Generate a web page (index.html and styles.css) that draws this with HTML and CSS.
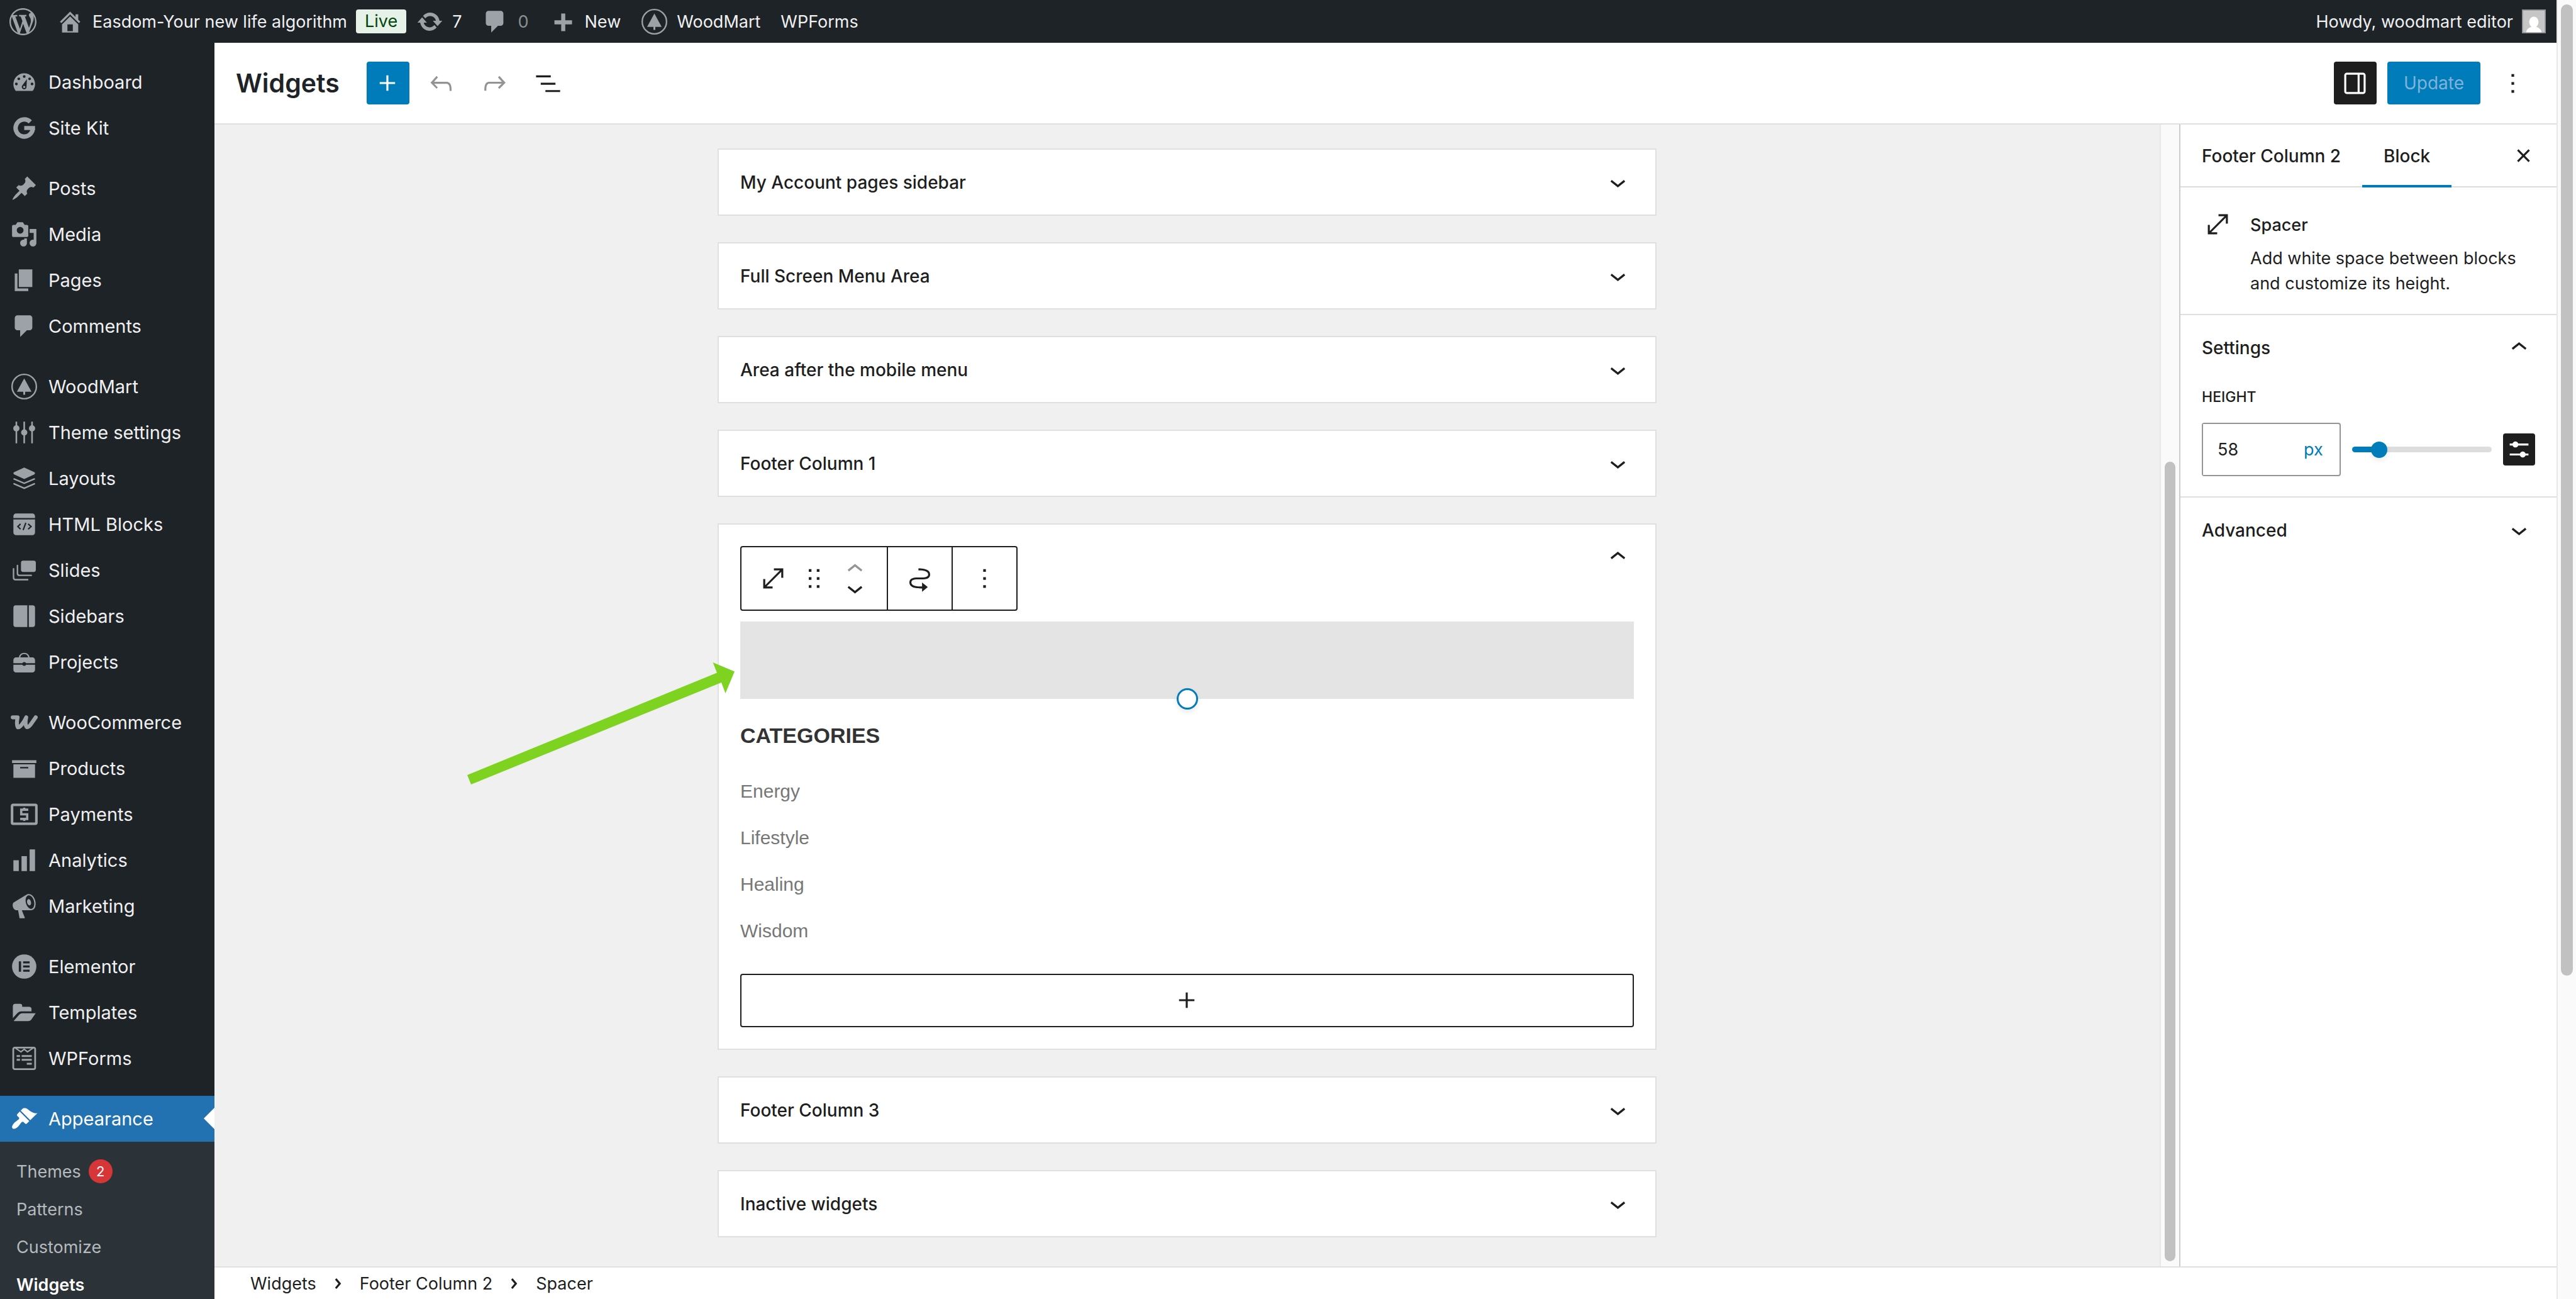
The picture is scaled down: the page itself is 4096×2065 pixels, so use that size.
FILE: index.html
```html
<!DOCTYPE html>
<html lang="en">
  <head>
    <meta charset="UTF-8" />
    <meta name="viewport" content="width=device-width, initial-scale=1.0" />
    <title>Widgets</title>
    <link rel="stylesheet" href="styles.css" />
  </head>
  <body>
    <!-- shared icons -->
    <svg class="sprite" aria-hidden="true">
      <symbol id="chevron-down" viewBox="0 0 24 24"><path d="M17.5 11.6L12 16l-5.5-4.4.9-1.2L12 14l4.5-3.6 1 1.2z" /></symbol>
      <symbol id="chevron-up" viewBox="0 0 24 24"><path d="M6.5 12.4L12 8l5.5 4.4-.9 1.2L12 10l-4.5 3.6-1-1.2z" /></symbol>
      <symbol id="chevron-small" viewBox="0 0 24 24"><path d="M10.862 8.04l3.418 3.989-3.418 3.988-1.139-.976 2.582-3.012-2.582-3.012 1.139-.977z" /></symbol>
      <symbol id="plus" viewBox="0 0 24 24"><path d="M11 12.5v5h1.5v-5h5V11h-5V6H11v5H6v1.5z" /></symbol>
      <symbol id="more" viewBox="0 0 24 24"><path d="M13 19h-2v-2h2v2zm0-6h-2v-2h2v2zm0-6h-2V5h2v2z" /></symbol>
      <symbol id="spacer" viewBox="0 0 24 24"><path d="M7 18h4.5v1.5h-7v-7H6V17L17 6h-4.5V4.5h7v7H18V7L7 18z" /></symbol>
      <symbol id="comment" viewBox="0 0 20 20"><path d="M5 2h9c1.1 0 2 .9 2 2v7c0 1.1-.9 2-2 2h-2l-5 5v-5H5c-1.1 0-2-.9-2-2V4c0-1.1.9-2 2-2z" /></symbol>
      <symbol id="woodmart" viewBox="0 0 20 20">
        <circle cx="10" cy="10" r="9" fill="none" stroke="currentColor" stroke-width="1.1" />
        <path d="M10 4l5.4 9.8h-4.7v2.3H9.3v-2.3H4.6z" />
      </symbol>
    </svg>

    <div class="page">
      <header class="adminbar">
        <a href="#" class="bar-item" aria-label="About WordPress">
          <svg class="dashicon" viewBox="0 0 20 20"><path d="M20 10c0-5.51-4.49-10-10-10C4.48 0 0 4.49 0 10c0 5.52 4.48 10 10 10 5.51 0 10-4.48 10-10zM7.78 15.37L4.37 6.22c.55-.02 1.17-.08 1.17-.08.5-.06.44-1.13-.06-1.11 0 0-1.45.11-2.37.11-.18 0-.37 0-.58-.01C4.12 2.69 6.87 1.11 10 1.11c2.33 0 4.45.87 6.05 2.34-.68-.11-1.65.39-1.65 1.58 0 .74.45 1.36.9 2.1.35.61.55 1.36.55 2.46 0 1.49-1.4 5-1.4 5l-3.03-8.37c.54-.02.82-.17.82-.17.5-.05.44-1.25-.06-1.22 0 0-1.44.12-2.38.12-.87 0-2.33-.12-2.33-.12-.5-.03-.56 1.2-.06 1.22l.92.08 1.26 3.41zM17.41 10c.24-.64.74-1.87.43-4.25.7 1.29 1.05 2.71 1.05 4.25 0 3.29-1.73 6.24-4.4 7.78.97-2.59 1.94-5.2 2.92-7.78zM6.1 18.09C3.12 16.65 1.11 13.53 1.11 10c0-1.3.23-2.48.72-3.59C3.25 10.3 4.67 14.2 6.1 18.09zm4.03-6.63l2.58 6.98c-.86.29-1.76.45-2.71.45-.79 0-1.57-.11-2.29-.33.81-2.38 1.62-4.74 2.42-7.1z" /></svg>
        </a>
        <a href="#" class="bar-item">
          <svg class="dashicon" viewBox="0 0 20 20"><path d="M16 8.5l1.53 1.53-1.06 1.06L10 4.6l-6.47 6.49-1.06-1.06L10 2.5l4 4v-2h2v4zm-6-2.46l6 5.99V18H4v-5.97zM12 17v-5H8v5h4z" /></svg>
          Easdom-Your new life algorithm
          <span class="live">Live</span>
        </a>
        <a href="#" class="bar-item after-live">
          <svg class="dashicon" viewBox="0 0 20 20"><path d="M10.2 3.28c3.53 0 6.43 2.61 6.92 6h2.08l-3.5 4-3.5-4h2.32c-.45-1.97-2.21-3.45-4.32-3.45-1.45 0-2.73.71-3.54 1.78L4.95 5.66C6.23 4.2 8.11 3.28 10.2 3.28zm-.4 13.44c-3.52 0-6.43-2.61-6.92-6H.8l3.5-4c1.17 1.33 2.33 2.67 3.5 4H5.48c.45 1.97 2.21 3.45 4.32 3.45 1.45 0 2.73-.71 3.54-1.78l1.71 1.95c-1.28 1.46-3.15 2.38-5.25 2.38z" /></svg>
          7
        </a>
        <a href="#" class="bar-item bar-muted"><svg class="dashicon"><use href="#comment" /></svg>0</a>
        <a href="#" class="bar-item">
          <svg class="dashicon" viewBox="0 0 20 20"><path d="M17 9v3h-5v5H9v-5H4V9h5V4h3v5z" /></svg>
          New
        </a>
        <a href="#" class="bar-item"><svg class="dashicon"><use href="#woodmart" /></svg>WoodMart</a>
        <a href="#" class="bar-item">WPForms</a>
        <a href="#" class="bar-item account">
          Howdy, woodmart editor
          <svg class="avatar" viewBox="0 0 18 18">
            <path fill="#8c8f94" d="M0 0h18v18H0z" />
            <path fill="#c6c6c6" d="M.8.8h16.4v16.4H.8z" />
            <path fill="#fff" d="M9 5.4c2.1 0 3.5 1.8 3.5 4 0 1.6-.7 3-1.7 3.7 2.2.6 3.9 2.2 4 4.1H3.2c.1-1.9 1.8-3.5 4-4.1-1-.7-1.7-2.1-1.7-3.7 0-2.2 1.4-4 3.5-4z" />
          </svg>
        </a>
      </header>

      <div class="main">
        <nav class="menu">
          <a href="#" class="menu-item">
            <svg class="dashicon" viewBox="0 0 20 20">
              <path d="M3.76 16.5h12.48C17.34 15.13 18 13.39 18 11.5c0-4.42-3.58-8-8-8s-8 3.58-8 8c0 1.89.66 3.63 1.76 5z" />
              <g class="cut">
                <circle cx="10" cy="5.9" r="1" /><circle cx="6" cy="7.6" r="1" /><circle cx="14" cy="7.6" r="1" />
                <circle cx="4.2" cy="11.4" r="1" /><circle cx="15.8" cy="11.4" r="1" />
                <path d="M12 7.8l-.3 5.8c0 1-.8 1.8-1.7 1.8s-1.8-.8-1.8-1.8c0-.6.2-1 .6-1.4z" />
              </g>
              <circle cx="10" cy="13.6" r=".8" />
            </svg>
            Dashboard
          </a>
          <a href="#" class="menu-item">
            <svg class="dashicon" viewBox="0 0 20 20"><path fill="none" stroke="currentColor" stroke-width="3.3" d="M14.5 5.5A6.35 6.35 0 1 0 16.33 10.5" /><path d="M10 8.5h8v3h-8z" /></svg>
            Site Kit
          </a>

          <a href="#" class="menu-item first">
            <svg class="dashicon" viewBox="0 0 20 20"><path d="M10.44 3.02l1.82-1.82 6.36 6.35-1.83 1.82c-1.05-.68-2.48-.57-3.41.36l-.75.75c-.92.93-1.04 2.35-.35 3.41l-1.83 1.82-2.41-2.41-2.8 2.79c-.42.42-3.38 2.71-3.8 2.29s1.86-3.39 2.28-3.81l2.79-2.79L4.1 9.36l1.83-1.82c1.05.69 2.48.57 3.4-.36l.75-.75c.93-.92 1.05-2.35.36-3.41z" /></svg>
            Posts
          </a>
          <a href="#" class="menu-item">
            <svg class="dashicon" viewBox="0 0 20 20"><path d="M13 11V4c0-.55-.45-1-1-1h-1.67L9 1H5L3.67 3H2c-.55 0-1 .45-1 1v7c0 .55.45 1 1 1h10c.55 0 1-.45 1-1zM7 4.5c1.38 0 2.5 1.12 2.5 2.5S8.38 9.5 7 9.5 4.5 8.38 4.5 7 5.62 4.5 7 4.5zM14 6h5v10.5c0 1.38-1.12 2.5-2.5 2.5S14 17.88 14 16.5s1.12-2.5 2.5-2.5c.17 0 .34.02.5.05V9h-3V6zm-4 8.05V13h2v3.5c0 1.38-1.12 2.5-2.5 2.5S7 17.88 7 16.5 8.12 14 9.5 14c.17 0 .34.02.5.05z" /></svg>
            Media
          </a>
          <a href="#" class="menu-item">
            <svg class="dashicon" viewBox="0 0 20 20"><path d="M6 15V2h10v13H6zm-1 1h8v2H3V5h2v11z" /></svg>
            Pages
          </a>
          <a href="#" class="menu-item"><svg class="dashicon"><use href="#comment" /></svg>Comments</a>

          <a href="#" class="menu-item first"><svg class="dashicon"><use href="#woodmart" /></svg>WoodMart</a>
          <a href="#" class="menu-item">
            <svg class="dashicon" viewBox="0 0 20 20">
              <path d="M3.6 2h1.2v16H3.6zM9.4 2h1.2v16H9.4zM15.2 2h1.2v16h-1.2z" />
              <circle cx="4.2" cy="7" r="2.3" /><circle cx="10" cy="10" r="2.3" /><circle cx="15.8" cy="7" r="2.3" />
            </svg>
            Theme settings
          </a>
          <a href="#" class="menu-item">
            <svg class="dashicon" viewBox="0 0 20 20">
              <path d="M10 2l7.4 3.4c.8.5.8 1.2 0 1.7L10 10.5 2.6 7.1c-.8-.5-.8-1.2 0-1.7z" />
              <path fill="none" stroke="currentColor" stroke-width="1.1" stroke-linecap="round" d="M2.5 10.4l7.5 3.2 7.5-3.2M2.5 14l7.5 3.3 7.5-3.3" />
            </svg>
            Layouts
          </a>
          <a href="#" class="menu-item">
            <svg class="dashicon" viewBox="0 0 20 20">
              <path d="M4 2h12a2 2 0 0 1 2 2v1.4H2V4a2 2 0 0 1 2-2zM2 6.4h16V16a2 2 0 0 1-2 2H4a2 2 0 0 1-2-2z" />
              <path class="cut-line" d="M7.3 9.7L5.3 11.6l2 2M12.9 9.7l2.2 1.9-2.2 2M11.2 8.9l-2 5.4" />
            </svg>
            HTML Blocks
          </a>
          <a href="#" class="menu-item">
            <svg class="dashicon" viewBox="0 0 20 20">
              <rect x="7.6" y="2.9" width="11" height="8.4" rx="1.6" />
              <path fill="none" stroke="currentColor" stroke-width="1.1" stroke-linecap="round" d="M5 6.5v5.8c0 .9.6 1.5 1.5 1.5h8.7M2.1 8.9v6.6c0 .9.6 1.5 1.5 1.5h9" />
            </svg>
            Slides
          </a>
          <a href="#" class="menu-item">
            <svg class="dashicon" viewBox="0 0 20 20"><path d="M3.8 2h8.5v16H3.8A1.8 1.8 0 0 1 2 16.2V3.8A1.8 1.8 0 0 1 3.8 2zM13.4 2h2.8A1.8 1.8 0 0 1 18 3.8v12.4a1.8 1.8 0 0 1-1.8 1.8h-2.8z" /></svg>
            Sidebars
          </a>
          <a href="#" class="menu-item">
            <svg class="dashicon" viewBox="0 0 20 20">
              <path fill="none" stroke="currentColor" d="M6.5 6.5C7 4.6 8.4 3.6 10 3.6s3 1 3.5 2.9" />
              <path d="M4 6.5h12a2 2 0 0 1 2 2v2.3H2V8.5a2 2 0 0 1 2-2zM2 12h16v3.7a2 2 0 0 1-2 2H4a2 2 0 0 1-2-2z" />
              <circle class="cut" cx="10" cy="11.4" r="1.4" />
            </svg>
            Projects
          </a>

          <a href="#" class="menu-item first">
            <svg class="dashicon" viewBox="0 0 20 20"><path fill="none" stroke="currentColor" stroke-width="2.9" stroke-linecap="round" stroke-linejoin="round" d="M1.5 6.2h3.6c-.5 2.6-.7 5.9.1 7.3 1.4.8 4.6-3.6 6.3-7.3-.7 2.8-.7 6.2.4 7.2 1.8.6 4.4-4.2 6.6-7.2" /></svg>
            WooCommerce
          </a>
          <a href="#" class="menu-item">
            <svg class="dashicon" viewBox="0 0 20 20"><path d="M19 4v2H1V4h18zM2 7h16v10H2V7zm11 3V9H7v1h6z" /></svg>
            Products
          </a>
          <a href="#" class="menu-item">
            <svg class="dashicon" viewBox="0 0 20 20">
              <rect x="1" y="3" width="18" height="14" rx=".8" fill="none" stroke="currentColor" stroke-width="1.9" />
              <path fill="none" stroke="currentColor" stroke-width="1.7" d="M13 6.6H7.8v3.4h4.4v3.4H7M10 5.1v1.5M10 13.4v1.5" />
            </svg>
            Payments
          </a>
          <a href="#" class="menu-item">
            <svg class="dashicon" viewBox="0 0 20 20"><path d="M18 18V2h-4v16h4zm-6 0V7H8v11h4zm-6 0v-8H2v8h4z" /></svg>
            Analytics
          </a>
          <a href="#" class="menu-item">
            <svg class="dashicon" viewBox="0 0 20 20"><path d="M18.15 5.94c.46 1.62.38 3.22-.02 4.48-.42 1.28-1.26 2.18-2.3 2.48-.16.06-.26.06-.4.06-.06.02-.12.02-.18.02-.06.02-.14.02-.22.02h-6.8l2.22 5.5c.02.14-.06.26-.14.34-.08.1-.24.16-.34.16H6.95c-.1 0-.26-.06-.34-.16-.08-.08-.16-.2-.14-.34l-1-5.5H4.25l-.02-.02c-.5.06-1.08-.18-1.54-.62s-.88-1.08-1.06-1.88c-.24-.8-.2-1.56-.02-2.2.18-.62.58-1.08 1.06-1.3l.02-.02 9-5.4c.1-.06.18-.1.24-.16.06-.04.14-.08.24-.12.16-.08.28-.12.5-.18 1.04-.3 2.24.1 3.22.98s1.84 2.24 2.26 3.86zm-2.58 5.98h-.02c.4-.1.74-.34 1.04-.7.58-.7.86-1.76.86-3.04 0-.64-.1-1.3-.28-1.98-.34-1.36-1.02-2.5-1.78-3.24s-1.68-1.1-2.46-.88c-.82.22-1.4.96-1.7 2-.32 1.04-.28 2.36.06 3.72.38 1.36 1 2.5 1.8 3.24.78.74 1.62 1.1 2.48.88zm-2.54-7.08c.22-.04.42-.02.62.04.38.16.76.48 1.02 1s.42 1.2.42 1.78c0 .3-.04.56-.12.8-.18.48-.44.84-.86.94-.34.1-.8-.06-1.14-.4s-.64-.86-.78-1.5c-.18-.62-.12-1.24.02-1.72s.48-.84.82-.94z" /></svg>
            Marketing
          </a>

          <a href="#" class="menu-item first">
            <svg class="dashicon" viewBox="0 0 20 20">
              <circle cx="10" cy="10" r="9" />
              <path class="cut" d="M6 6.2h1.7v7.6H6zM9.2 6.2H14v1.5H9.2zM9.2 9.2H14v1.5H9.2zM9.2 12.3H14v1.5H9.2z" />
            </svg>
            Elementor
          </a>
          <a href="#" class="menu-item">
            <svg class="dashicon" viewBox="0 0 20 20"><path d="M1.6 14.2V5.3c0-1 .7-1.7 1.7-1.7h3.7c.9 0 1.5.5 1.5 1.3v.9h5.2c1 0 1.7.6 1.7 1.5v1.9H8.1c-1.8 0-2.8.8-3.9 2.1zM2.3 16.2l3.5-4c.8-1 1.6-1.6 2.8-1.6h9.9l-3 4.3c-.7 1-1.5 1.5-2.7 1.5H2.5c-.2 0-.3-.1-.2-.2z" /></svg>
            Templates
          </a>
          <a href="#" class="menu-item">
            <svg class="dashicon" viewBox="0 0 20 20">
              <rect x="1.9" y="2" width="16.2" height="16" rx="1.2" fill="none" stroke="currentColor" stroke-width="1.3" />
              <path fill="none" stroke="currentColor" d="M3.5 2.4l4.1 2.8L10 3.2l2.4 2 4.1-2.8" />
              <path d="M4.4 7.6h2.5V9H4.4zM8.1 7.6h7.5V9H8.1zM4.4 10.4h2.5v1.4H4.4zM8.1 10.4h7.5v1.4H8.1zM11.9 13.3h3.7v1.4h-3.7z" />
            </svg>
            WPForms
          </a>

          <a href="#" class="menu-item first current">
            <svg class="dashicon" viewBox="0 0 20 20"><path d="M14.48 11.06L7.41 3.99l1.5-1.5c.5-.56 2.3-.47 3.51.32 1.21.8 1.43 1.28 2.91 2.1 1.18.64 2.45 1.26 4.45.85zm-.71.71L6.7 4.7 4.93 6.47c-.39.39-.39 1.02 0 1.41l1.06 1.06c.39.39.39 1.03 0 1.42-.6.6-1.43 1.11-2.21 1.69-.35.26-.7.53-1.01.84C1.43 14.23.4 16.08 1.4 17.07c.99 1 2.84-.03 4.18-1.36.31-.31.58-.66.85-1.02.57-.78 1.08-1.61 1.69-2.21.39-.39 1.02-.39 1.41 0l1.06 1.06c.39.39 1.02.39 1.41 0z" /></svg>
            Appearance
          </a>
          <div class="submenu">
            <a href="#">Themes <span class="count">2</span></a>
            <a href="#">Patterns</a>
            <a href="#">Customize</a>
            <a href="#" class="active">Widgets</a>
          </div>
        </nav>

        <div class="editor">
          <div class="editor-header">
            <h1>Widgets</h1>
            <button class="btn primary" aria-label="Toggle block inserter"><svg class="icon"><use href="#plus" /></svg></button>
            <button class="btn" aria-label="Undo" disabled>
              <svg class="icon" viewBox="0 0 24 24"><path d="M18.3 11.7c-.6-.6-1.4-.9-2.3-.9H6.7l2.9-3.3-1.1-1-4.5 5L8.5 16l1-1-2.7-2.7H16c.5 0 .9.2 1.3.5 1 1 1 3.4 1 4.5v.3h1.5v-.2c0-1.5 0-4.3-1.5-5.7z" /></svg>
            </button>
            <button class="btn" aria-label="Redo" disabled>
              <svg class="icon" viewBox="0 0 24 24"><path d="M15.6 6.5l-1.1 1 2.9 3.3H8c-.9 0-1.7.3-2.3.9-1.4 1.5-1.4 4.2-1.4 5.6v.2h1.5v-.3c0-1.1 0-3.5 1-4.5.3-.3.7-.5 1.3-.5h9.2L14.5 15l1.1 1.1 4.6-4.6-4.6-5z" /></svg>
            </button>
            <button class="btn" aria-label="List View">
              <svg class="icon" viewBox="0 0 24 24"><path d="M3 6h11v1.5H3zM6.5 11.5h11V13h-11zM21 17H10v1.5h11z" /></svg>
            </button>
            <button class="btn dark push" aria-label="Settings">
              <svg class="icon" viewBox="0 0 24 24"><path d="M18 4H6c-1.1 0-2 .9-2 2v12c0 1.1.9 2 2 2h12c1.1 0 2-.9 2-2V6c0-1.1-.9-2-2-2zm-4 14.5H6c-.3 0-.5-.2-.5-.5V6c0-.3.2-.5.5-.5h8v13zm4.5-.5c0 .3-.2.5-.5.5h-2.5v-13H18c.3 0 .5.2.5.5v12z" /></svg>
            </button>
            <button class="btn primary update">Update</button>
            <button class="btn" aria-label="Options"><svg class="icon"><use href="#more" /></svg></button>
          </div>

          <div class="editor-body">
            <main class="canvas">
              <section class="area">
                <button class="area-toggle">My Account pages sidebar <svg class="icon"><use href="#chevron-down" /></svg></button>
              </section>
              <section class="area">
                <button class="area-toggle">Full Screen Menu Area <svg class="icon"><use href="#chevron-down" /></svg></button>
              </section>
              <section class="area">
                <button class="area-toggle">Area after the mobile menu <svg class="icon"><use href="#chevron-down" /></svg></button>
              </section>
              <section class="area">
                <button class="area-toggle">Footer Column 1 <svg class="icon"><use href="#chevron-down" /></svg></button>
              </section>

              <section class="area">
                <button class="area-toggle" aria-label="Footer Column 2"><span></span><svg class="icon"><use href="#chevron-up" /></svg></button>
                <div class="toolbar">
                  <div class="toolbar-group">
                    <button aria-label="Spacer"><svg class="icon"><use href="#spacer" /></svg></button>
                    <button aria-label="Drag">
                      <svg class="icon" viewBox="0 0 24 24"><path d="M8 7h2V5H8v2zm0 6h2v-2H8v2zm0 6h2v-2H8v2zm6-14v2h2V5h-2zm0 8h2v-2h-2v2zm0 6h2v-2h-2v2z" /></svg>
                    </button>
                    <div class="movers">
                      <button aria-label="Move up" disabled><svg viewBox="0 5 24 14"><path d="M6.5 12.4L12 8l5.5 4.4-.9 1.2L12 10l-4.5 3.6-1-1.2z" /></svg></button>
                      <button aria-label="Move down"><svg viewBox="0 5 24 14"><path d="M17.5 11.6L12 16l-5.5-4.4.9-1.2L12 14l4.5-3.6 1 1.2z" /></svg></button>
                    </div>
                  </div>
                  <div class="toolbar-group">
                    <button aria-label="Move to widget area">
                      <svg class="icon" viewBox="0 0 24 24"><path d="M19.75 9c0-1.257-.565-2.197-1.39-2.858-.797-.64-1.827-1.017-2.815-1.247-1.802-.42-3.703-.403-4.383-.396L11 4.5V6l.177-.001c.696-.006 2.416-.02 4.028.356.887.207 1.67.518 2.216.957.52.416.829.945.829 1.688 0 .592-.167.966-.407 1.23-.255.281-.656.508-1.236.674-1.19.34-2.82.346-4.607.346h-.077c-1.692 0-3.527 0-4.942.404-.732.209-1.424.545-1.935 1.108-.526.579-.796 1.33-.796 2.238 0 1.257.565 2.197 1.39 2.858.797.64 1.827 1.017 2.815 1.247 1.802.42 3.703.403 4.383.396L13 19.5h.714V22L18 18.5 13.714 15v3H13l-.177.001c-.696.006-2.416.02-4.028-.356-.887-.207-1.67-.518-2.216-.957-.52-.416-.829-.945-.829-1.688 0-.592.167-.966.407-1.23.255-.281.656-.508 1.237-.674 1.189-.34 2.819-.346 4.606-.346h.077c1.692 0 3.527 0 4.941-.404.732-.209 1.425-.545 1.936-1.108.526-.579.796-1.33.796-2.238z" /></svg>
                    </button>
                  </div>
                  <div class="toolbar-group">
                    <button aria-label="Options"><svg class="icon"><use href="#more" /></svg></button>
                  </div>
                </div>

                <div class="area-content">
                  <div class="spacer-block">
                    <span class="resize-handle"></span>
                    <svg class="pointer" viewBox="0 0 427 197"><path fill="#7ed321" d="M1 180L398 17.5 391.5 1 426 15.5 411.5 50 405 33 7 195z" /></svg>
                  </div>
                  <h2 class="widget-title">CATEGORIES</h2>
                  <ul class="categories">
                    <li><a href="#">Energy</a></li>
                    <li><a href="#">Lifestyle</a></li>
                    <li><a href="#">Healing</a></li>
                    <li><a href="#">Wisdom</a></li>
                  </ul>
                  <button class="appender" aria-label="Add block"><svg class="icon"><use href="#plus" /></svg></button>
                </div>
              </section>

              <section class="area">
                <button class="area-toggle">Footer Column 3 <svg class="icon"><use href="#chevron-down" /></svg></button>
              </section>
              <section class="area">
                <button class="area-toggle">Inactive widgets <svg class="icon"><use href="#chevron-down" /></svg></button>
              </section>
            </main>
            <div class="scrollbar canvas-scroll"><span></span></div>

            <aside class="settings">
              <div class="tabs">
                <button class="tab">Footer Column 2</button>
                <button class="tab selected">Block</button>
                <button class="close" aria-label="Close settings">
                  <svg class="icon" viewBox="0 0 24 24"><path d="M12 13.06l3.712 3.713 1.061-1.06L13.061 12l3.712-3.712-1.06-1.06L12 10.938 8.288 7.227l-1.061 1.06L10.939 12l-3.712 3.712 1.06 1.061z" /></svg>
                </button>
              </div>
              <div class="card">
                <svg class="icon"><use href="#spacer" /></svg>
                <div class="card-text">
                  <h2>Spacer</h2>
                  <p>Add white space between blocks and customize its height.</p>
                </div>
              </div>
              <div class="panel">
                <button class="panel-toggle">Settings <svg class="icon"><use href="#chevron-up" /></svg></button>
                <div class="panel-body">
                  <label for="height">Height</label>
                  <div class="height-row">
                    <div class="unit-control">
                      <input type="text" id="height" value="58" />
                      <select aria-label="Unit"><option>px</option></select>
                    </div>
                    <input type="range" min="0" max="376" value="58" aria-label="Height slider" />
                    <button class="custom-size" aria-label="Set custom size">
                      <svg class="icon" viewBox="0 0 24 24"><path d="M19 7.5h-7.628c-.309-.874-1.142-1.5-2.122-1.5s-1.813.626-2.122 1.5H5V9h2.128c.309.874 1.142 1.5 2.122 1.5s1.813-.626 2.122-1.5H19zM19 15h-2.128c-.309-.874-1.142-1.5-2.122-1.5s-1.813.626-2.122 1.5H5v1.5h7.628c.309.874 1.142 1.5 2.122 1.5s1.813-.626 2.122-1.5H19z" /></svg>
                    </button>
                  </div>
                </div>
              </div>
              <div class="panel">
                <button class="panel-toggle">Advanced <svg class="icon"><use href="#chevron-down" /></svg></button>
              </div>
            </aside>
          </div>

          <footer class="breadcrumb">
            <a href="#">Widgets</a>
            <svg class="icon"><use href="#chevron-small" /></svg>
            <a href="#">Footer Column 2</a>
            <svg class="icon"><use href="#chevron-small" /></svg>
            <span>Spacer</span>
          </footer>
        </div>
      </div>
    </div>
    <div class="scrollbar page-scroll"><span></span></div>
  </body>
</html>
```
FILE: styles.css
```css
* {
  box-sizing: border-box;
  margin: 0;
  padding: 0;
}

body {
  display: flex;
  height: 100vh;
  overflow: hidden;
  font-family: Inter, "Liberation Sans", sans-serif;
  font-size: 27px;
  color: #1e1e1e;
  background: #fff;
}

a {
  color: inherit;
  text-decoration: none;
}

button {
  display: flex;
  align-items: center;
  justify-content: center;
  font: inherit;
  color: inherit;
  background: none;
  border: none;
  cursor: pointer;
}

svg {
  display: block;
  flex: none;
  fill: currentColor;
}

.sprite {
  position: absolute;
  width: 0;
  height: 0;
}

.icon {
  width: 51px;
  height: 51px;
}

.dashicon {
  width: 43px;
  height: 43px;
  color: #9ca2a7;
}

.page {
  flex: 1;
  min-width: 0;
  display: flex;
  flex-direction: column;
}

/* admin bar */
.adminbar {
  display: flex;
  align-items: center;
  gap: 32px;
  height: 68px;
  padding: 0 17px 0 15px;
  color: #f0f0f1;
  background: #1d2327;
}

.bar-item {
  display: flex;
  align-items: center;
  gap: 14px;
  white-space: nowrap;
}

.live {
  padding: 0 14px;
  line-height: 38px;
  color: #00450c;
  background: #e6f2e8;
  border-radius: 4px;
}

.after-live {
  margin-left: -16px;
}

.bar-muted {
  color: #8c8f92;
}

.account {
  margin-left: auto;
}

.avatar {
  width: 38px;
  height: 38px;
}

/* left menu */
.main {
  flex: 1;
  min-height: 0;
  display: flex;
}

.menu {
  flex: none;
  width: 341px;
  padding-top: 26px;
  overflow: hidden;
  font-size: 29px;
  color: #f0f0f1;
  background: #1d2327;
}

.menu-item {
  display: flex;
  align-items: center;
  gap: 17px;
  height: 73px;
  padding-left: 17px;
}

.first {
  margin-top: 23px;
}

.cut {
  fill: #1d2327;
}

.cut-line {
  fill: none;
  stroke: #1d2327;
  stroke-width: 1;
}

.current {
  position: relative;
  color: #fff;
  background: #2271b1;
}

.current .dashicon {
  color: #fff;
}

.current::after {
  content: "";
  position: absolute;
  right: 0;
  top: 19px;
  border: 17px solid transparent;
  border-left: none;
  border-right-color: #fff;
}

.submenu {
  height: 300px;
  padding-top: 17px;
  font-size: 27px;
  color: #b5babf;
  background: #2c3338;
}

.submenu a {
  display: flex;
  align-items: center;
  gap: 12px;
  height: 60px;
  padding-left: 26px;
}

.submenu .active {
  font-weight: 600;
  color: #fff;
}

.count {
  width: 38px;
  font-size: 22px;
  line-height: 38px;
  text-align: center;
  color: #fff;
  background: #d63638;
  border-radius: 50%;
}

/* editor */
.editor {
  flex: 1;
  min-width: 0;
  display: flex;
  flex-direction: column;
}

.editor-header {
  display: flex;
  align-items: center;
  gap: 17px;
  height: 130px;
  padding: 0 36px 0 34px;
  border-bottom: 2px solid #e0e0e0;
}

.editor-header h1 {
  margin-right: 26px;
  font-size: 41px;
  font-weight: 600;
  color: #1d2327;
}

.btn {
  width: 68px;
  height: 68px;
  border-radius: 4px;
}

.btn:disabled,
.movers button:disabled {
  color: #949494;
}

.primary {
  color: #fff;
  background: #007cba;
}

.dark {
  color: #fff;
  background: #1e1e1e;
}

.push {
  margin-left: auto;
}

.update {
  width: auto;
  padding: 0 26px;
  font-size: 28px;
  color: #7fb3d9;
}

.editor-body {
  flex: 1;
  min-height: 0;
  display: flex;
}

.canvas {
  flex: 1;
  display: flex;
  flex-direction: column;
  gap: 42px;
  padding-top: 38px;
  overflow: hidden;
  background: #f0f0f0;
}

.area {
  flex: none;
  position: relative;
  width: 1493px;
  max-width: 100%;
  margin: 0 auto;
  background: #fff;
  border: 2px solid #e0e0e0;
}

.area-toggle {
  justify-content: space-between;
  width: 100%;
  height: 103px;
  padding: 0 34px;
  font-size: 28px;
  font-weight: 500;
}

.area-content {
  padding: 51px 34px 34px;
}

.toolbar {
  position: absolute;
  top: 34px;
  left: 34px;
  display: flex;
  height: 103px;
  background: #fff;
  border: 2px solid #1e1e1e;
  border-radius: 4px;
}

.toolbar-group {
  display: flex;
  align-items: center;
  gap: 14px;
  padding: 0 25px;
}

.toolbar-group + .toolbar-group {
  border-left: 2px solid #1e1e1e;
}

.movers svg {
  width: 51px;
  height: 30px;
}

.spacer-block {
  position: relative;
  height: 123px;
  background: #e4e4e4;
}

.resize-handle {
  position: absolute;
  left: 50%;
  bottom: -17px;
  width: 34px;
  height: 34px;
  margin-left: -17px;
  background: #fff;
  border: 3px solid #007cba;
  border-radius: 50%;
  box-shadow: 0 4px 8px rgba(0, 0, 0, 0.08);
}

/* green arrow lying over the canvas */
.pointer {
  position: absolute;
  top: 64px;
  left: -435px;
  width: 427px;
  height: 197px;
}

.widget-title {
  margin-top: 34px;
  font-family: "Liberation Sans", Arial, sans-serif;
  font-size: 34px;
  line-height: 48px;
  color: #333;
}

.categories {
  display: flex;
  flex-direction: column;
  gap: 32px;
  margin: 44px 0 47px;
  font-family: "Liberation Sans", Arial, sans-serif;
  font-size: 30px;
  line-height: 42px;
  color: #777;
  list-style: none;
}

.appender {
  width: 100%;
  height: 85px;
  border: 2px solid #1e1e1e;
  border-radius: 4px;
}

/* scrollbars */
.scrollbar {
  flex: none;
  width: 31px;
  background: #fafafa;
  border-left: 2px solid #e8e8e8;
}

.scrollbar span {
  display: block;
  width: 17px;
  margin: 0 auto;
  background: #c1c1c1;
  border-radius: 10px;
}

.canvas-scroll {
  padding: 536px 0 8px;
}

.canvas-scroll span {
  height: 100%;
}

.page-scroll {
  padding-top: 7px;
}

.page-scroll span {
  width: 19px;
  height: 75%;
}

/* block settings */
.settings {
  flex: none;
  width: 600px;
  border-left: 2px solid #ccc;
}

.tabs {
  display: flex;
  height: 100px;
  padding-right: 27px;
  border-bottom: 2px solid #ddd;
}

.tab {
  height: 100px;
  padding: 0 34px;
  font-size: 28px;
  font-weight: 500;
}

.selected {
  box-shadow: inset 0 -4px #007cba;
}

.close {
  margin-left: auto;
}

.card {
  display: flex;
  gap: 26px;
  padding: 33px 34px 28px;
  border-bottom: 2px solid #e0e0e0;
}

.card-text {
  padding-top: 5px;
}

.card h2 {
  margin-bottom: 12px;
  font-size: 27px;
  font-weight: 500;
  line-height: 43px;
}

.card p {
  line-height: 40px;
}

.panel + .panel {
  border-top: 2px solid #e0e0e0;
}

.panel-toggle {
  justify-content: space-between;
  width: 100%;
  height: 103px;
  padding: 0 34px;
  font-size: 28px;
  font-weight: 500;
}

.panel-body {
  padding: 12px 34px 32px;
}

.panel-body label {
  display: block;
  margin-bottom: 26px;
  font-size: 23px;
  font-weight: 500;
  line-height: 30px;
  text-transform: uppercase;
}

.height-row {
  display: flex;
  align-items: center;
  gap: 18px;
}

.unit-control {
  display: flex;
  width: 221px;
  height: 85px;
  border: 2px solid #949494;
  border-radius: 4px;
}

.unit-control input {
  flex: 1;
  min-width: 0;
  padding-left: 23px;
  font: inherit;
  color: inherit;
  border: none;
}

.unit-control select {
  appearance: none;
  padding: 0 26px 0 8px;
  font: inherit;
  color: #007cba;
  background: none;
  border: none;
}

input[type="range"] {
  appearance: none;
  flex: 1;
  min-width: 0;
  height: 9px;
  background: linear-gradient(to right, #007cba 20%, #ddd 20%);
  border-radius: 5px;
}

input[type="range"]::-webkit-slider-thumb {
  appearance: none;
  width: 26px;
  height: 26px;
  background: #007cba;
  border-radius: 50%;
  box-shadow: 0 4px 8px rgba(0, 0, 0, 0.08);
}

.custom-size {
  width: 51px;
  height: 51px;
  color: #fff;
  background: #1e1e1e;
  border-radius: 4px;
}

/* footer */
.breadcrumb {
  display: flex;
  align-items: center;
  gap: 9px;
  height: 52px;
  padding-left: 57px;
  border-top: 2px solid #e0e0e0;
}
```
